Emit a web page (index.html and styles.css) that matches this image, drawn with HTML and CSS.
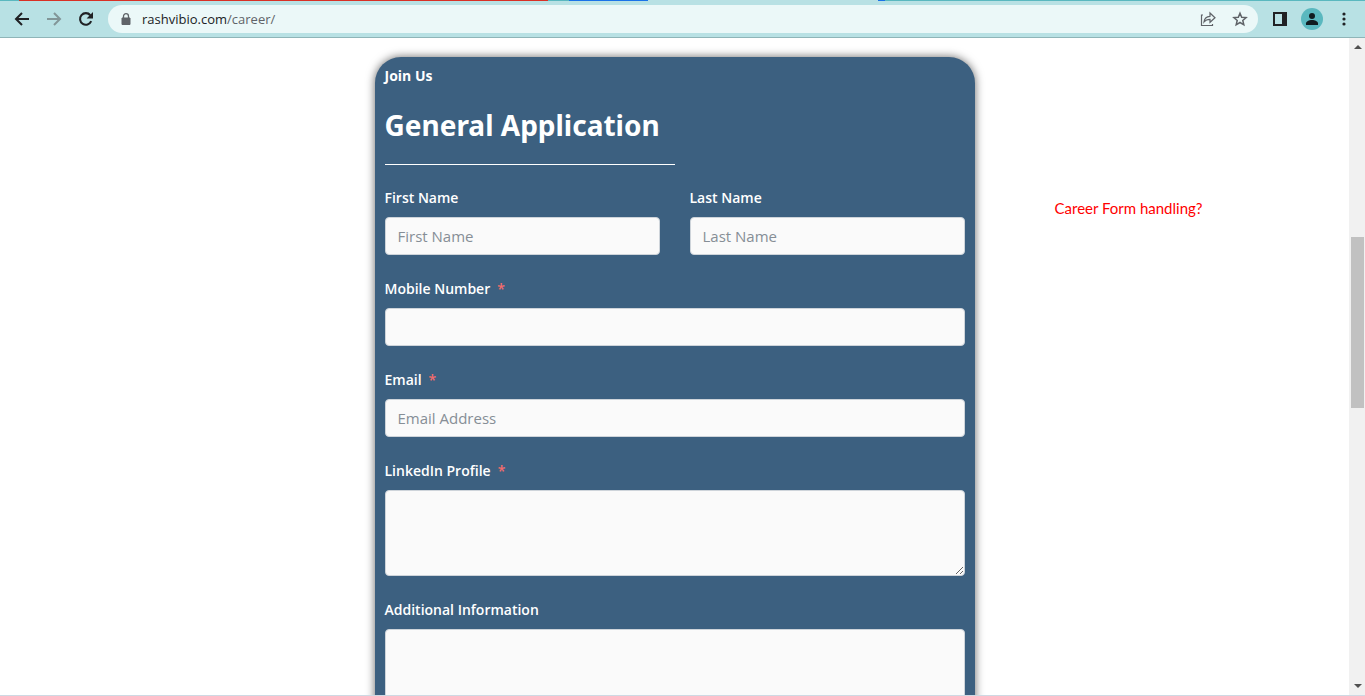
FILE: index.html
```html
<!DOCTYPE html>
<html lang="en">
<head>
<meta charset="utf-8">
<title>Career</title>
<link rel="stylesheet" href="styles.css">
</head>
<body>
<header class="browser">
  <div class="tab-edge"><span class="edge-teal"></span><span class="edge-red"></span><span class="edge-gap"></span><span class="edge-blue"></span><span class="edge-pale"></span><span class="edge-dot"></span><span class="edge-rest"></span></div>
  <nav class="toolbar" aria-label="Browser">
    <button class="tool" aria-label="Back"><svg width="16" height="16" viewBox="0 0 16 16"><path d="M15 8H2M8 2L2 8l6 6" fill="none" stroke="#202124" stroke-width="2"/></svg></button>
    <button class="tool" aria-label="Forward"><svg width="16" height="16" viewBox="0 0 16 16"><path d="M1 8h13M8 2l6 6-6 6" fill="none" stroke="#829698" stroke-width="2"/></svg></button>
    <button class="tool" aria-label="Reload"><svg width="16" height="16" viewBox="0 0 16 16"><path d="M13.2 10.2A5.8 5.8 0 1 1 12.3 4.2" fill="none" stroke="#202124" stroke-width="2.1"/><path d="M15 1v6.4H8.6z" fill="#202124"/></svg></button>
    <div class="address">
      <svg width="10" height="13" viewBox="0 0 10 13"><path d="M1 5h8v6.500H1z" fill="#5f6368" stroke="#5f6368" stroke-linejoin="round"/><path d="M2.500 5V3.200a2.500 2.500 0 0 1 5 0V5" fill="none" stroke="#5f6368" stroke-width="1.300"/></svg>
      <a class="url" href="#form">rashvibio.com<span class="path">/career/</span></a>
      <button class="tool small" aria-label="Share"><svg width="16" height="16" viewBox="0 0 16 16"><path d="M3 4H1.500v10.500h11V13M4 11C4.300 7.500 6.200 5.500 10 5.300V2l5 4.700-5 4.600V8.300C7.200 8.300 5.500 9 4 11z" fill="none" stroke="#5f6368" stroke-width="1.200"/></svg></button>
      <button class="tool small" aria-label="Bookmark"><svg width="16" height="16" viewBox="0 0 16 16"><path d="M8 2.200l1.700 4 4.400.4-3.300 2.900 1 4.300L8 11.500l-3.800 2.300 1-4.300L1.900 6.600l4.400-.4z" fill="none" stroke="#5f6368" stroke-width="1.500"/></svg></button>
    </div>
    <button class="tool" aria-label="Side panel"><svg width="14" height="14" viewBox="0 0 14 14"><path d="M0 0h14v14H0zM2 2v10h7V2z" fill="#202124" fill-rule="evenodd"/></svg></button>
    <button class="avatar" aria-label="Profile"><svg width="22" height="22" viewBox="0 0 22 22"><circle cx="11" cy="8" r="3" fill="#101c20"/><path d="M5 17v-1.500c0-2 3-3.500 6-3.500s6 1.500 6 3.500V17z" fill="#101c20"/></svg></button>
    <button class="tool" aria-label="Menu"><svg width="4" height="14" viewBox="0 0 4 14"><g fill="#202124"><circle cx="2" cy="2" r="1.600"/><circle cx="2" cy="7" r="1.600"/><circle cx="2" cy="12" r="1.600"/></g></svg></button>
  </nav>
</header>
<div class="viewport">
  <main class="page">
    <form class="card" id="form">
      <p class="eyebrow">Join Us</p>
      <h1 class="title">General Application</h1>
      <hr class="rule">
      <div class="fields">
        <div class="pair">
          <div class="field"><label for="first">First Name</label><input id="first" type="text" placeholder="First Name"></div>
          <div class="field"><label for="last">Last Name</label><input id="last" type="text" placeholder="Last Name"></div>
        </div>
        <div class="field"><label for="mobile">Mobile Number<span class="req">*</span></label><input id="mobile" type="tel"></div>
        <div class="field"><label for="email">Email<span class="req">*</span></label><input id="email" type="email" placeholder="Email Address"></div>
        <div class="field"><label for="linkedin">LinkedIn Profile<span class="req">*</span></label><textarea id="linkedin"></textarea></div>
        <div class="field"><label for="info">Additional Information</label><textarea id="info"></textarea></div>
      </div>
    </form>
    <p class="note">Career Form handling?</p>
  </main>
  <div class="scrollbar" aria-hidden="true">
    <svg width="8" height="4" viewBox="0 0 8 4"><path d="M0 4l4-4 4 4z" fill="#505050"/></svg>
    <div class="track"><div class="thumb"></div></div>
    <svg width="8" height="4" viewBox="0 0 8 4"><path d="M0 0l4 4 4-4z" fill="#505050"/></svg>
  </div>
</div>
</body>
</html>
```
FILE: styles.css
```css
* { box-sizing: border-box; }
body {
  margin: 0;
  height: 100vh;
  display: flex;
  flex-direction: column;
  overflow: hidden;
  background: #fff;
  font-family: "Open Sans", "Noto Sans", sans-serif;
}
button { border: 0; padding: 0; background: none; display: grid; place-items: center; }

.browser { background: #b8e1e4; border-bottom: 1px solid #8fb5b8; }
.tab-edge { display: flex; height: 1px; background: #5ab8bf; }
.edge-teal { width: 19px; }
.edge-red { width: 529px; background: #d93025; }
.edge-gap { width: 21px; }
.edge-blue { width: 79px; background: #1a73e8; }
.edge-pale { width: 230px; background: #b8e1e4; }
.edge-dot { width: 7px; background: #1a73e8; }
.edge-rest { flex: 1; }
.toolbar { display: flex; align-items: center; height: 36px; padding: 0 9px 0 10px; gap: 8px; }
.tool { width: 24px; height: 24px; }
.address {
  flex: 1;
  display: flex;
  align-items: center;
  gap: 8px;
  height: 28px;
  margin-right: 2px;
  margin-left: 2px;
  padding: 0 6px 0 13px;
  border-radius: 14px;
  background: #ebf8f8;
}
.url { flex: 1; padding-left: 3px; color: #202124; font: 13px/20px "Open Sans", sans-serif; text-decoration: none; }
.path { color: #5f6368; }
.avatar { width: 24px; height: 24px; }
.avatar svg { border-radius: 50%; background: #5ab8bf; }

.viewport { flex: 1; min-height: 0; display: flex; border-bottom: 1px solid #ced9e3; }
.page {
  flex: 1;
  min-width: 0;
  display: grid;
  grid-template-columns: 1fr 600px 1fr;
  align-items: start;
  overflow: hidden;
  padding: 19px 0 0;
}
.card {
  grid-column: 2;
  padding: 8px 10px 40px;
  border-radius: 26px;
  background: #3c6080;
  color: #fff;
  box-shadow: 0 0 10px rgba(0, 0, 0, .6);
}
.eyebrow { margin: 0; font: 700 14px/22px "Open Sans", sans-serif; }
.title { margin: 18px 0 19px; font: 700 28px/40px "Noto Sans", sans-serif; }
.rule { width: 50%; height: 1px; margin: 0; border: 0; background: #fff; }
.fields { display: grid; gap: 23px; padding-top: 22px; }
.pair { display: grid; grid-template-columns: 1fr 1fr; gap: 30px; }
.field { display: grid; gap: 8px; }
.field label { font-size: 14px; font-weight: 600; line-height: 22px; }
.req { margin-left: 7px; color: #f56c6c; }
.field input, .field textarea {
  display: block;
  width: 100%;
  height: 38px;
  padding: 6px 12px;
  border: 1px solid #ced4da;
  border-radius: 4px;
  background: #fafafa;
  color: #495057;
  font: 15px/24px "Open Sans", sans-serif;
}
.field textarea { height: 86px; resize: vertical; }
.field input::placeholder { color: #868e96; opacity: 1; }
.note { margin: 0; padding: 139px 0 0 80px; color: #f00; font: 15px/24px Lato, sans-serif; }

.scrollbar {
  width: 16px;
  display: flex;
  flex-direction: column;
  align-items: center;
  padding: 7px 0;
  background: #f1f1f1;
}
.scrollbar svg { margin-left: 1px; }
.track { flex: 1; align-self: stretch; padding: 0 1px 0 2px; }
.thumb { height: 27%; margin-top: 188px; background: #c1c1c1; }
```
